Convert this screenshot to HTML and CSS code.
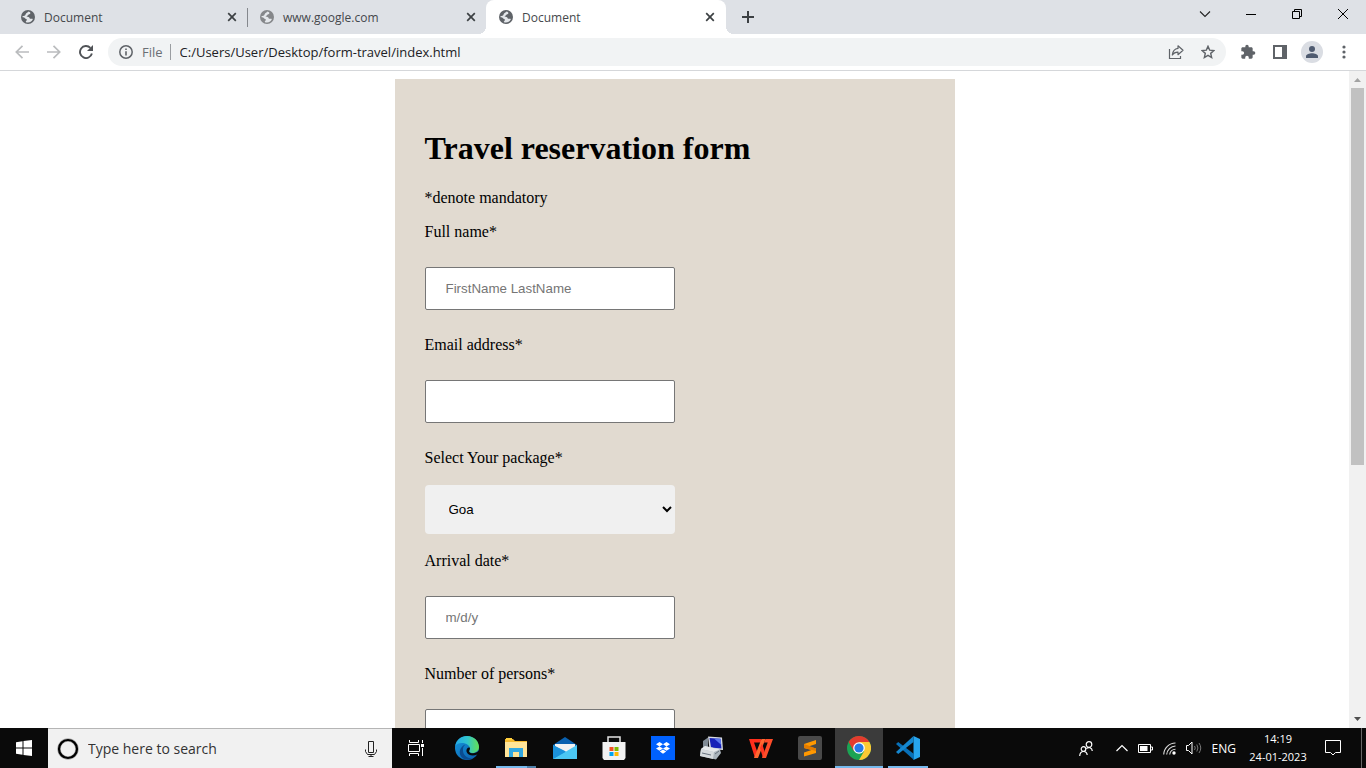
FILE: index.html
```html
<!DOCTYPE html>
<html lang="en">
<head>
<meta charset="utf-8">
<meta name="viewport" content="width=device-width, initial-scale=1">
<title>Document</title>
<link rel="stylesheet" href="styles.css">
</head>
<body>
<svg class="defs" width="0" height="0" aria-hidden="true">
  <symbol id="globe" viewBox="0 0 14 14">
    <circle cx="7" cy="7" r="7" fill="currentColor"/>
    <path d="M7.6 1.5C9 2 9.6 2.6 9.3 3.5C9 4.4 7.600 4 7.200 4.900C6.900 5.700 5.700 5.400 5.600 6.300C5.600 7 7.600 6.700 8.300 7.400C8.900 8 8.500 8.600 9.300 8.700C10.200 8.800 10.700 8.400 11.900 8.900C11.100 11 9.300 12.400 7 12.500C6 12.400 5.200 12.200 4.800 11.900C4.700 11 6 10.800 5.900 9.800C5.800 8.900 4.500 9.200 4 8.300C3.500 7.400 2.600 7.300 1.600 7.200C1.500 6.800 1.500 6.400 1.600 6C3 6.200 3.500 6 4.200 5.300C4.900 4.600 4.600 3.500 5.600 3.100C6.500 2.800 6.700 2 7.600 1.500Z" class="land"/>
  </symbol>
  <symbol id="cross" viewBox="0 0 10 10">
    <path d="M1.200 1.200L8.800 8.800M8.800 1.200L1.200 8.800" stroke="currentColor" stroke-width="1.700" fill="none"/>
  </symbol>
</svg>

<header class="browser">
  <div class="tabstrip">
    <nav class="tabs" aria-label="Tabs">
      <div class="tab divided"><svg class="favicon"><use href="#globe"/></svg><span class="tab-title">Document</span><button class="tab-close" aria-label="Close tab"><svg><use href="#cross"/></svg></button></div>
      <div class="tab muted"><svg class="favicon"><use href="#globe"/></svg><span class="tab-title">www.google.com</span><button class="tab-close" aria-label="Close tab"><svg><use href="#cross"/></svg></button></div>
      <div class="tab active"><svg class="favicon"><use href="#globe"/></svg><span class="tab-title">Document</span><button class="tab-close" aria-label="Close tab"><svg><use href="#cross"/></svg></button></div>
      <button class="new-tab" aria-label="New tab"><svg width="12" height="12" viewBox="0 0 12 12"><path d="M6 0V12M0 6H12" stroke="#3c4043" stroke-width="2"/></svg></button>
    </nav>
    <div class="window-controls">
      <button aria-label="Search tabs"><svg width="12" height="12" viewBox="0 0 12 12"><path d="M1 3.500L6 8.500L11 3.500" fill="none" stroke="#222" stroke-width="1.100"/></svg></button>
      <button aria-label="Minimize"><svg width="10" height="10" viewBox="0 0 10 10"><path d="M0 5.500H10" stroke="#000"/></svg></button>
      <button aria-label="Restore"><svg width="10" height="10" viewBox="0 0 10 10"><path d="M.5 2.500H7.500V9.500H.5ZM2.500 2.500V.5H9.500V7.500H7.500" fill="none" stroke="#000"/></svg></button>
      <button aria-label="Close"><svg width="10" height="10" viewBox="0 0 10 10"><path d="M0 0L10 10M10 0L0 10" stroke="#000"/></svg></button>
    </div>
  </div>
  <div class="toolbar">
    <button class="tool" aria-label="Back"><svg width="14" height="14" viewBox="0 0 14 14"><path d="M14 7H1.500M7.500 .8L1.300 7L7.500 13.200" fill="none" stroke="#babcbe" stroke-width="1.700"/></svg></button>
    <button class="tool" aria-label="Forward"><svg width="14" height="14" viewBox="0 0 14 14"><path d="M0 7H12.500M6.500 .8L12.700 7L6.500 13.200" fill="none" stroke="#babcbe" stroke-width="1.700"/></svg></button>
    <button class="tool" aria-label="Reload"><svg width="14" height="14" viewBox="0 0 14 14"><path d="M11.400 2.800A6.050 6.050 0 1 0 12.900 8.600" fill="none" stroke="#505357" stroke-width="1.900"/><path d="M14 0V6H8Z" fill="#505357"/></svg></button>
    <div class="address">
      <svg width="14" height="14" viewBox="0 0 14 14"><circle cx="7" cy="7" r="6.200" fill="none" stroke="#5f6368" stroke-width="1.500"/><path d="M7 6.200V10.500M7 3.400V4.900" stroke="#5f6368" stroke-width="1.600"/></svg>
      <label class="scheme" for="url">File</label>
      <input class="url" id="url" type="text" value="C:/Users/User/Desktop/form-travel/index.html">
      <button class="tool" aria-label="Share"><svg width="16" height="16" viewBox="0 0 16 16"><path d="M1.500 5V14.500H12.500V12" fill="none" stroke="#5f6368" stroke-width="1.200"/><path d="M10 1.800L15 6.300L10 10.700V8.100C7.500 8 5.700 8.900 4.300 11C4.700 7.500 6.500 4.900 10 4.400Z" fill="none" stroke="#5f6368" stroke-width="1.200" stroke-linejoin="round"/></svg></button>
      <button class="tool" aria-label="Bookmark"><svg width="14" height="14" viewBox="0 0 14 14"><path d="M7 1.300L8.650 5.150L12.900 5.550L9.700 8.350L10.650 12.500L7 10.300L3.350 12.500L4.300 8.350L1.100 5.550L5.350 5.150Z" fill="none" stroke="#5f6368" stroke-width="1.400"/></svg></button>
    </div>
    <button class="tool" aria-label="Extensions"><svg width="16" height="16" viewBox="0 0 24 24"><path d="M20.500 11H19V7c0-1.100-.9-2-2-2h-4V3.500a2.500 2.500 0 0 0-5 0V5H4c-1.100 0-2 .9-2 2v3.800h1.500a2.700 2.700 0 0 1 0 5.400H2V20c0 1.100.9 2 2 2h3.800v-1.500a2.700 2.700 0 0 1 5.400 0V22H17c1.100 0 2-.9 2-2v-4h1.500a2.500 2.500 0 0 0 0-5z" fill="#5f6368"/></svg></button>
    <button class="tool" aria-label="Side panel"><svg width="14" height="14" viewBox="0 0 14 14"><path fill-rule="evenodd" d="M0 0H14V14H0ZM2 2V12H9V2Z" fill="#5f6368"/></svg></button>
    <button class="tool" aria-label="Profile"><svg width="22" height="22" viewBox="0 0 22 22"><circle cx="11" cy="11" r="11" fill="#dadde3"/><circle cx="11" cy="8" r="3" fill="#4f5b70"/><path d="M5 17V15.300C5 13.300 8.500 12.300 11 12.300S17 13.300 17 15.300V17Z" fill="#4f5b70"/></svg></button>
    <button class="tool" aria-label="Menu"><svg width="4" height="14" viewBox="0 0 4 14"><g fill="#5f6368"><circle cx="2" cy="2" r="1.600"/><circle cx="2" cy="7" r="1.600"/><circle cx="2" cy="12" r="1.600"/></g></svg></button>
  </div>
</header>

<div class="viewport">
  <main class="page">
    <form class="reservation">
      <h1>Travel reservation form</h1>
      <p>*denote mandatory</p>
      <div class="field"><label for="name">Full name*</label><input id="name" type="text" placeholder="FirstName LastName"></div>
      <div class="field"><label for="email">Email address*</label><input id="email" type="email"></div>
      <div class="field compact"><label for="package">Select Your package*</label><select id="package"><option>Goa</option></select></div>
      <div class="field"><label for="arrival">Arrival date*</label><input id="arrival" type="text" placeholder="m/d/y"></div>
      <div class="field"><label for="persons">Number of persons*</label><input id="persons" type="text"></div>
    </form>
  </main>
  <div class="scrollbar" aria-hidden="true">
    <svg width="17" height="17" viewBox="0 0 17 17"><path d="M5 11L8.500 7L12 11Z" fill="#a3a3a3"/></svg>
    <div class="track"><div class="thumb"></div></div>
    <svg width="17" height="17" viewBox="0 0 17 17"><path d="M5 6L8.500 10L12 6Z" fill="#505050"/></svg>
  </div>
</div>

<footer class="taskbar">
  <button class="task" aria-label="Start"><svg width="16" height="16" viewBox="0 0 16 16"><path d="M0 2.200L6.500 1.300V7.500H0ZM7.500 1.100L16 0V7.500H7.500ZM0 8.500H6.500V14.700L0 13.800ZM7.500 8.500H16V16L7.500 14.900Z" fill="#fff"/></svg></button>
  <div class="search">
    <svg width="22" height="22" viewBox="0 0 22 22"><circle cx="11" cy="11" r="9" fill="none" stroke="#aaa" stroke-width="3.500"/><circle cx="11" cy="11" r="9" fill="none" stroke="#000" stroke-width="2.200"/></svg>
    <input type="text" aria-label="Search" placeholder="Type here to search">
    <svg width="12" height="16" viewBox="0 0 12 16"><path d="M3.500 .5H8.500V11.500H3.500ZM.5 8.500V10.500L2.500 13.500H9.500L11.500 10.500V8.500M6 13.500V15.500M3.500 15.500H8.500" fill="none" stroke="#222"/></svg>
  </div>
  <div class="apps">
    <button class="task view" aria-label="Task view"><svg width="17" height="16" viewBox="0 0 17 16"><path d="M1.500 0V2.500H10.500V0M.5 4.500H11.500V11.500H.5ZM1.500 16V13.500H10.500V16M14.500 0V3M14.500 8V16" fill="none" stroke="#fff"/><path d="M13 4H16V7H13Z" fill="#fff"/></svg></button>
    <button class="task" aria-label="Edge"><svg width="24" height="24" viewBox="0 0 24 24">
      <defs><linearGradient id="eg" x1="0" x2="1"><stop stop-color="#24a9e8"/><stop offset=".5" stop-color="#30c5cf"/><stop offset="1" stop-color="#65df52"/></linearGradient><linearGradient id="eb" x1="0" x2="1" y2="1"><stop stop-color="#1597dc"/><stop offset="1" stop-color="#0b5baa"/></linearGradient></defs>
      <circle cx="12" cy="12" r="12" fill="url(#eb)"/>
      <path d="M.2 10C1.200 4 6 0 12 0C19 0 24 5.300 24 11C24 14.500 21 17 17.500 17C14.500 17 13.500 15.500 14.500 14C15.300 12.800 15 10.500 13 9C8.500 5.800 2 7 .2 10Z" fill="url(#eg)"/>
      <path d="M8 13C7.500 18.500 11.500 22.500 17.500 22.300C14 24.500 9 24 6.500 21C3 17 5 10.500 10.500 8.500C8.800 9.800 8.100 11 8 13Z" fill="#0a4c91"/>
      <path d="M14.500 14C13.300 15.800 15 17.300 18 17.200C20.500 17.200 22 16.500 24 14.500V18.500L22.300 18.500C18 20.500 12.500 19.500 11.500 15.500C11 13 12.700 11.200 14.600 11.600C15.100 12.300 15 13.300 14.500 14Z" fill="#0a0a0a"/></svg></button>
    <button class="task running grouped" aria-label="File Explorer"><svg width="22" height="20" viewBox="0 0 22 20"><path d="M0 1H8L10 3H22V19H0Z" fill="#f5b92f"/><path d="M0 4H22V19H0Z" fill="#ffe498"/><path d="M1 0H7V2H1Z" fill="#ffcf3d"/><path d="M4 19V10H18V19H14V14H8V19Z" fill="#31a8e2"/></svg></button>
    <button class="task" aria-label="Mail"><svg width="24" height="24" viewBox="0 0 24 24"><path d="M0 9L12 1L24 9V20H0Z" fill="#0a61b0"/><path d="M2 8H22V20H2Z" fill="#f3f3f3"/><path d="M0 9L24 23H0Z" fill="#24a3e3"/><path d="M24 9V23H0L13 15.500Z" fill="#4bc7f4"/><path d="M0 9V23L13 15.500Z" fill="#1b92dc"/></svg></button>
    <button class="task" aria-label="Store"><svg width="24" height="24" viewBox="0 0 24 24"><path d="M6 6V1H18V6" fill="none" stroke="#e4e4e4" stroke-width="1.500"/><path d="M0.500 6H23.500V22L22 24H2L.5 22Z" fill="#f2f2f2"/><path d="M7.500 11H11.500V15H7.500Z" fill="#f25022"/><path d="M12.500 11H16.500V15H12.500Z" fill="#7fba00"/><path d="M7.500 16H11.500V20H7.500Z" fill="#00a4ef"/><path d="M12.500 16H16.500V20H12.500Z" fill="#ffb900"/></svg></button>
    <button class="task" aria-label="Dropbox"><svg width="24" height="24" viewBox="0 0 24 24"><path d="M0 0H24V24H0Z" fill="#0061fe"/><path d="M8.500 6L12 8.200L8.500 10.400L5 8.200ZM15.500 6L19 8.200L15.500 10.400L12 8.200ZM8.500 10.400L12 12.600L8.500 14.800L5 12.600ZM15.500 10.400L19 12.600L15.500 14.800L12 12.600ZM12 13.600L15.200 15.600L12 17.700L8.800 15.600Z" fill="#fff"/></svg></button>
    <button class="task" aria-label="Remote computer"><svg width="24" height="24" viewBox="0 0 24 24"><path d="M3 12V5L8 1.500V14Z" fill="#7f8a94"/><path d="M8 .5L22 1.500L23 14L9.500 13Z" fill="#d8dce2"/><path d="M9.500 2L20.500 2.800L21.500 12.500L11 11.500Z" fill="#1822b8"/><path d="M14 2.400L20.500 2.800L21.300 9Z" fill="#5a76ed"/><path d="M1 13L5 10L20 13.500L21 17L16 23.500L0 20Z" fill="#aab4bb"/><path d="M1 13L14 16L13 23L0 20Z" fill="#d5dadd"/><path d="M5 10L20 13.500L14 16L1 13Z" fill="#e6e9eb"/><path d="M2 17L11 19M15 18L19 15" stroke="#67727e"/></svg></button>
    <button class="task" aria-label="WPS Office"><svg width="24" height="19" viewBox="0 0 24 19"><path d="M0 0H12L13.500 3.500H5L8 12L9 15L7 19H6Z" fill="#ff2f1c"/><path d="M5 19L12.500 0H16.500L9 19Z" fill="#ff6830"/><path d="M11 9L13 4.500L15.500 12V19H14Z" fill="#ff3420"/><path d="M13 19L20 0H24L17 19ZM16.500 0H21L20 3.500H15Z" fill="#ff4c29"/></svg></button>
    <button class="task" aria-label="Sublime Text"><svg width="24" height="24" viewBox="0 0 24 24"><rect width="24" height="24" rx="2" fill="#494949"/><path d="M6 8L18 4V8L10.500 10.500L18 12.500V17L6 20.500V16.500L13.500 14L6 12Z" fill="#ff9800"/><path d="M6 8L18 12.500V15L6 12Z" fill="#e27b00"/></svg></button>
    <button class="task running current" aria-label="Chrome"><svg width="24" height="24" viewBox="0 0 24 24"><circle cx="12" cy="12" r="12" fill="#1ba354"/><path d="M1.600 6A12 12 0 0 1 22.400 6H12L6.800 15Z" fill="#e33b2e"/><path d="M12 6H22.400A12 12 0 0 1 12 24L17.200 15Z" fill="#fcc934"/><circle cx="12" cy="12" r="5.800" fill="#fff"/><circle cx="12" cy="12" r="4.600" fill="#2679e9"/></svg></button>
    <button class="task running" aria-label="Visual Studio Code"><svg width="24" height="24" viewBox="0 0 24 24"><path d="M17.500 0L24 3V21L17.500 24Z" fill="#27a5ee"/><path d="M0 8L2.200 6L18 18V24Z" fill="#0870b8"/><path d="M0 16L17.500 0V6L2.200 18Z" fill="#1587cf"/></svg></button>
  </div>
  <div class="tray">
    <button class="tray-icon people" aria-label="People"><svg width="14" height="15" viewBox="0 0 14 15"><g fill="none" stroke="#fff" stroke-width="1.200"><circle cx="10" cy="3.500" r="2.800"/><circle cx="4.500" cy="8" r="2.300"/><path d="M.7 15C.9 12 2.300 10.500 4.500 10.500S8 12 8.200 14M7.300 7.600C9.500 5.700 13 6.500 13.300 10"/></g></svg></button>
    <button class="tray-icon" aria-label="Show hidden icons"><svg width="12" height="8" viewBox="0 0 12 8"><path d="M.5 7L6 1.500L11.500 7" fill="none" stroke="#fff" stroke-width="1.200"/></svg></button>
    <button class="tray-icon" aria-label="Battery"><svg width="15" height="9" viewBox="0 0 15 9"><path d="M.5 .5H12.500V8.500H.5ZM12.500 3H14.500V6H12.500" fill="none" stroke="#fff"/><path d="M2 2H9.500V7H2Z" fill="#fff"/></svg></button>
    <button class="tray-icon" aria-label="Network"><svg width="13" height="13" viewBox="0 0 13 13"><g fill="none" stroke="#ddd" stroke-width="1.100"><path d="M.7 12.500A12 12 0 0 1 12.500 1M3.700 12.500A9 9 0 0 1 12.500 4M6.700 12.500A6 6 0 0 1 12.500 7.200"/></g><circle cx="11" cy="11" r="1.700" fill="#fff"/></svg></button>
    <button class="tray-icon" aria-label="Volume"><svg width="16" height="14" viewBox="0 0 16 14"><path d="M.5 4.500H2.500L6 1V13L2.500 9.500H.5Z" fill="none" stroke="#fff"/><g fill="none" stroke="#777"><path d="M8.500 5Q10 7 8.500 9M10.800 3.500Q13 7 10.800 10.500M13 2Q16.500 7 13 12"/></g></svg></button>
    <span class="lang">ENG</span>
    <div class="clock"><time>14:19</time><time datetime="2023-01-24">24-01-2023</time></div>
    <button class="notify" aria-label="Notifications"><svg width="16" height="16" viewBox="0 0 16 16"><path d="M.5 .5H15.500V12.500H10.500L8 15L5.500 12.500H.5Z" fill="none" stroke="#fff"/></svg></button>
  </div>
</footer>
</body>
</html>
```

FILE: styles.css
```css
* { box-sizing: border-box; }

html, body { height: 100%; }

body {
  margin: 0;
  display: flex;
  flex-direction: column;
  overflow: hidden;
  background: #fff;
  font-family: "Open Sans", "Noto Sans", sans-serif;
  font-size: 12px;
}

button {
  display: flex;
  align-items: center;
  justify-content: center;
  margin: 0;
  padding: 0;
  border: 0;
  background: none;
  font: inherit;
}

svg { display: block; flex: none; }
.defs { position: absolute; }

/* Browser chrome */
.browser { flex: none; }

.tabstrip {
  display: flex;
  justify-content: space-between;
  height: 34px;
  background: #dee1e6;
}

.tabs { display: flex; padding-left: 8px; }

.tab {
  position: relative;
  display: flex;
  align-items: center;
  gap: 9px;
  width: 239px;
  padding: 0 10px 0 13px;
  color: #5f6368;
}

.tab.muted { color: #85878a; }

.tab.divided::after {
  content: "";
  position: absolute;
  top: 8px;
  right: -1px;
  width: 1px;
  height: 19px;
  background: #85888d;
}

.tab.active { width: 240px; padding-right: 11px; background: #fff; border-radius: 8px 8px 0 0; }

.tab.active::before,
.tab.active::after {
  content: "";
  position: absolute;
  bottom: 0;
  width: 8px;
  height: 8px;
}
.tab.active::before { right: 100%; background: radial-gradient(circle at 0 0, transparent 8px, #fff 8px); }
.tab.active::after { left: 100%; background: radial-gradient(circle at 100% 0, transparent 8px, #fff 8px); }

.favicon { width: 14px; height: 14px; }
.land { fill: #e4e7eb; }
.tab-title { flex: 1; color: #45484c; }
.tab-close { color: #3c4043; }
.tab-close svg { width: 10px; height: 10px; }
.new-tab { width: 44px; }

.window-controls { display: flex; }
.window-controls button { width: 46px; height: 28px; }

.toolbar {
  display: flex;
  align-items: center;
  height: 37px;
  padding: 0 6px;
  border-bottom: 1px solid #d5d7da;
}

.tool { flex: none; width: 32px; height: 28px; }

.address {
  flex: 1;
  display: flex;
  align-items: center;
  height: 28px;
  margin: 0 6px;
  padding: 0 2px 0 11px;
  border-radius: 14px;
  background: #f1f3f4;
  font-size: 13px;
}

.scheme {
  margin-left: 9px;
  padding-right: 7px;
  border-right: 1px solid #9a9da1;
  line-height: 16px;
  color: #6b6f74;
}

.url {
  flex: 1;
  min-width: 0;
  padding: 0 0 0 9px;
  border: 0;
  outline: 0;
  background: none;
  color: #202124;
  font: inherit;
}

/* Document area */
.viewport { flex: 1; min-height: 0; display: flex; }

.page {
  flex: 1;
  overflow: hidden;
  padding: 8px;
  color: #000;
  font: 16px/18px "Liberation Serif", "Times New Roman", serif;
}

.reservation {
  max-width: 560px;
  margin: 0 auto;
  padding: 30px;
  background: #e1dad0;
}

.reservation h1 { margin: 21px 0 22px; font-size: 32px; line-height: 37px; }
.reservation p { margin: 0 0 16px; }

.field {
  display: flex;
  flex-direction: column;
  align-items: flex-start;
  gap: 26px;
  margin-bottom: 26px;
}
.field.compact { gap: 18px; margin-bottom: 18px; }

.field input,
.field select {
  width: 250px;
  max-width: 100%;
  margin: 0;
  border-radius: 2px;
  font-family: "Liberation Sans", Arial, sans-serif;
}
.field input {
  height: 43px;
  padding: 12px 20px;
  border: 1px solid #767676;
  background: #fff;
}
.field input::placeholder { color: #757575; opacity: 1; }
.field select {
  height: 49px;
  padding: 12px 0 12px 20px;
  border: 0;
  border-radius: 4px;
  background-color: #f0f0f0;
  color: #000;
}

.scrollbar {
  flex: none;
  display: flex;
  flex-direction: column;
  width: 17px;
  background: #f1f1f1;
}
.track { flex: 1; padding: 0 2px; }
.thumb { height: 60.5%; background: #c1c1c1; }

/* Taskbar */
.taskbar {
  flex: none;
  display: flex;
  height: 40px;
  background: #0a0a0a;
  color: #fff;
}

.task { flex: none; width: 48px; height: 40px; }

.search {
  flex: none;
  display: flex;
  align-items: center;
  gap: 9px;
  width: 344px;
  padding: 0 15px 0 9px;
  border-top: 1px solid #b5b5b5;
  background: #f1f1f1;
}
.search input {
  flex: 1;
  min-width: 0;
  padding: 0;
  border: 0;
  outline: 0;
  background: none;
  font: 14px "Open Sans", sans-serif;
}
.search input::placeholder { color: #333; opacity: 1; }

.apps { display: flex; gap: 1px; }
.view { margin-right: 2px; }
.running { background: linear-gradient(#76b9ed, #76b9ed) center bottom / 40px 2px no-repeat; }
.running.grouped { background-image: linear-gradient(90deg, #76b9ed 78%, #4f81aa 78%); }
.running.current { background-color: #3b3b3b; background-size: 100% 2px; }

.tray {
  display: flex;
  align-items: center;
  height: 40px;
  margin-left: auto;
  margin-right: 4px;
  padding-right: 18px;
  border-right: 1px solid #666;
}
.tray-icon { width: 24px; height: 40px; }
.people { margin-right: 12px; }
.lang { margin-left: 6px; }
.clock {
  display: flex;
  flex-direction: column;
  align-items: center;
  width: 60px;
  margin: 0 15px 0 12px;
  font-size: 11px;
  line-height: 18px;
}
.notify { width: 20px; height: 40px; }
```
